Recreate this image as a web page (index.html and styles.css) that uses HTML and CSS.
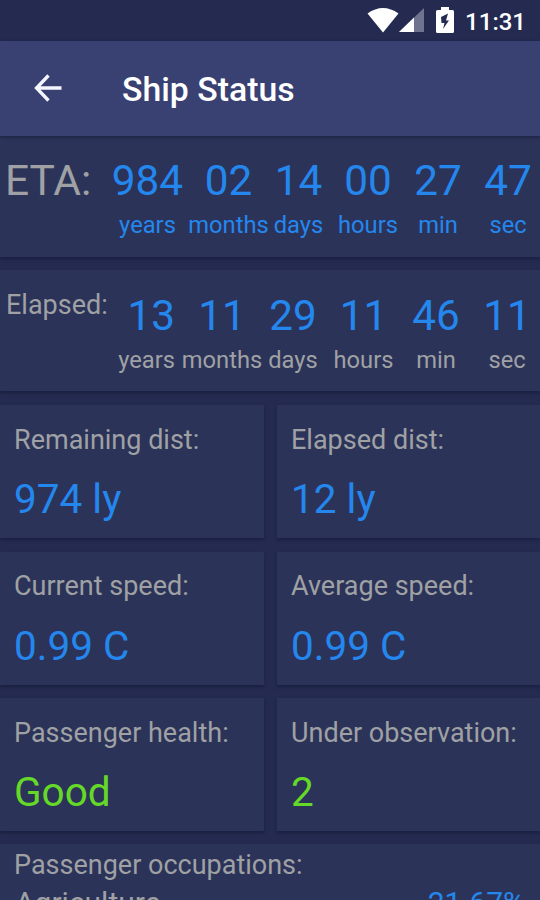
FILE: index.html
```html
<!DOCTYPE html>
<html lang="en">

<head>
    <meta charset="UTF-8" />
    <meta name="viewport" content="width=device-width, initial-scale=1.0" />
    <title>Ship Status</title>
    <link rel="stylesheet" href="styles.css">
</head>

<body>
    <div class="screen">
        <div class="status-bar">
            <svg class="wifi" width="32" height="26" viewBox="0 0 32 26">
                <path d="M.5 6.500Q16-4.500 31.500 6.500L16 25.500Z" fill="#fff" />
            </svg>
            <svg class="signal" width="25" height="24" viewBox="0 0 25 24">
                <path d="M0 24L25 0V24Z" fill="#70738f" />
                <path d="M0 24L15 9.600V24Z" fill="#fff" />
            </svg>
            <svg class="battery" width="18" height="26" viewBox="0 0 18 26">
                <path d="M5 0H13V3H16.500Q18 3 18 4.500V24.500Q18 26 16.500 26H1.500Q0 26 0 24.500V4.500Q0 3 1.500 3H5Z" fill="#fff" />
                <path d="M12 6.500L5 10L5.500 16H8.500L7 22L13 13.500H10Z" fill="#242a50" />
            </svg>
            <span class="clock">11:31</span>
        </div>

        <header class="toolbar">
            <svg class="back" width="28" height="28" viewBox="0 0 28 28">
                <path d="M27.500 14H2.500M14.500 1.500L2.500 14L14.500 26.500" fill="none" stroke="#f4f6ff" stroke-width="3.300" />
            </svg>
            <h1>Ship Status</h1>
        </header>

        <main>
            <section class="card timer eta">
                <h2>ETA:</h2>
                <div class="units">
                    <div class="unit"><b>984</b><span>years</span></div>
                    <div class="unit"><b>02</b><span>months</span></div>
                    <div class="unit"><b>14</b><span>days</span></div>
                    <div class="unit"><b>00</b><span>hours</span></div>
                    <div class="unit"><b>27</b><span>min</span></div>
                    <div class="unit"><b>47</b><span>sec</span></div>
                </div>
            </section>

            <section class="card timer elapsed">
                <h2>Elapsed:</h2>
                <div class="units">
                    <div class="unit"><b>13</b><span>years</span></div>
                    <div class="unit"><b>11</b><span>months</span></div>
                    <div class="unit"><b>29</b><span>days</span></div>
                    <div class="unit"><b>11</b><span>hours</span></div>
                    <div class="unit"><b>46</b><span>min</span></div>
                    <div class="unit"><b>11</b><span>sec</span></div>
                </div>
            </section>

            <div class="stats">
                <div class="card stat">
                    <h3>Remaining dist:</h3>
                    <p>974 ly</p>
                </div>
                <div class="card stat">
                    <h3>Elapsed dist:</h3>
                    <p>12 ly</p>
                </div>
                <div class="card stat">
                    <h3>Current speed:</h3>
                    <p>0.99 C</p>
                </div>
                <div class="card stat">
                    <h3>Average speed:</h3>
                    <p>0.99 C</p>
                </div>
                <div class="card stat">
                    <h3>Passenger health:</h3>
                    <p class="good">Good</p>
                </div>
                <div class="card stat">
                    <h3>Under observation:</h3>
                    <p class="good">2</p>
                </div>
            </div>

            <section class="card occupations">
                <h3>Passenger occupations:</h3>
                <div class="row">
                    <span>Agriculture</span>
                    <span class="percent">21.67%</span>
                </div>
            </section>
        </main>
    </div>
</body>

</html>
```
FILE: styles.css
```css
* {
    box-sizing: border-box;
}

body {
    margin: 0;
    font-family: Roboto, sans-serif;
    background-color: #252b50;
    color: #9fa1a4;
}

h1,
h2,
h3,
p {
    margin: 0;
    font-weight: 400;
}

.screen {
    width: 540px;
    height: 900px;
    overflow: hidden;
}

.status-bar {
    display: flex;
    align-items: center;
    justify-content: flex-end;
    height: 41px;
    padding: 0 14px 2px 0;
    background-color: #242a50;
    color: #fff;
}

.signal {
    margin-right: 12px;
}

.battery {
    margin-right: 11px;
}

.clock {
    font-size: 24px;
    font-weight: 500;
    line-height: 28px;
    padding-top: 4px;
}

.toolbar {
    position: relative;
    display: flex;
    align-items: center;
    height: 95px;
    padding: 0 0 1px 34px;
    background-color: #394173;
    color: #fff;
    box-shadow: 0 1px 3px rgba(10, 14, 40, 0.5);
}

.toolbar h1 {
    margin-left: 60px;
    padding-top: 3px;
    font-size: 33.8px;
    font-weight: 500;
    line-height: 40px;
}

.card {
    background-color: #2c3359;
    box-shadow: 0 2px 3px rgba(10, 14, 40, 0.4);
}

.timer {
    display: flex;
    height: 121px;
    padding: 23px 0 0 5px;
}

.elapsed {
    margin: 13px 0 14px;
    padding: 23px 0 0 6px;
}

.timer h2 {
    font-size: 42.5px;
    line-height: 44px;
    white-space: nowrap;
}

.elapsed h2 {
    font-size: 27px;
    line-height: 24px;
}

.eta h2 {
    width: 94px;
}

.elapsed h2 {
    width: 102px;
}

.units {
    display: grid;
}

.eta .units {
    grid-template-columns: 97px 65px 75px 64px 76px 64px;
    color: #2487ee;
}

.elapsed .units {
    grid-template-columns: 79px 70px 72px 69px 76px 66px;
    padding-top: 1px;
}

.unit {
    display: flex;
    flex-direction: column;
    align-items: center;
}

.elapsed .unit:first-child {
    align-items: flex-end;
    padding-right: 12px;
}

.unit b {
    font-size: 42.3px;
    font-weight: 400;
    line-height: 44px;
    color: #2487ee;
}

.unit span {
    margin-top: 7px;
    font-size: 23.7px;
    line-height: 30px;
}

.stats {
    display: grid;
    grid-template-columns: 264px 263px;
    grid-auto-rows: 133px;
    gap: 13.5px 13px;
}

.stat {
    padding: 18.6px 14px 0;
}

.stat h3,
.occupations h3 {
    font-size: 27px;
    line-height: 32px;
    white-space: nowrap;
}

.stat p {
    margin-top: 19.6px;
    font-size: 40.5px;
    line-height: 48px;
    color: #2487ee;
}

.stat .good {
    color: #65d927;
}

.occupations {
    height: 120px;
    margin-top: 13px;
    padding: 5px 15px 0 14px;
}

.row {
    display: flex;
    justify-content: space-between;
    margin-top: 6px;
    padding-left: 1px;
    font-size: 30px;
    line-height: 32px;
}

.percent {
    color: #2487ee;
}
```
